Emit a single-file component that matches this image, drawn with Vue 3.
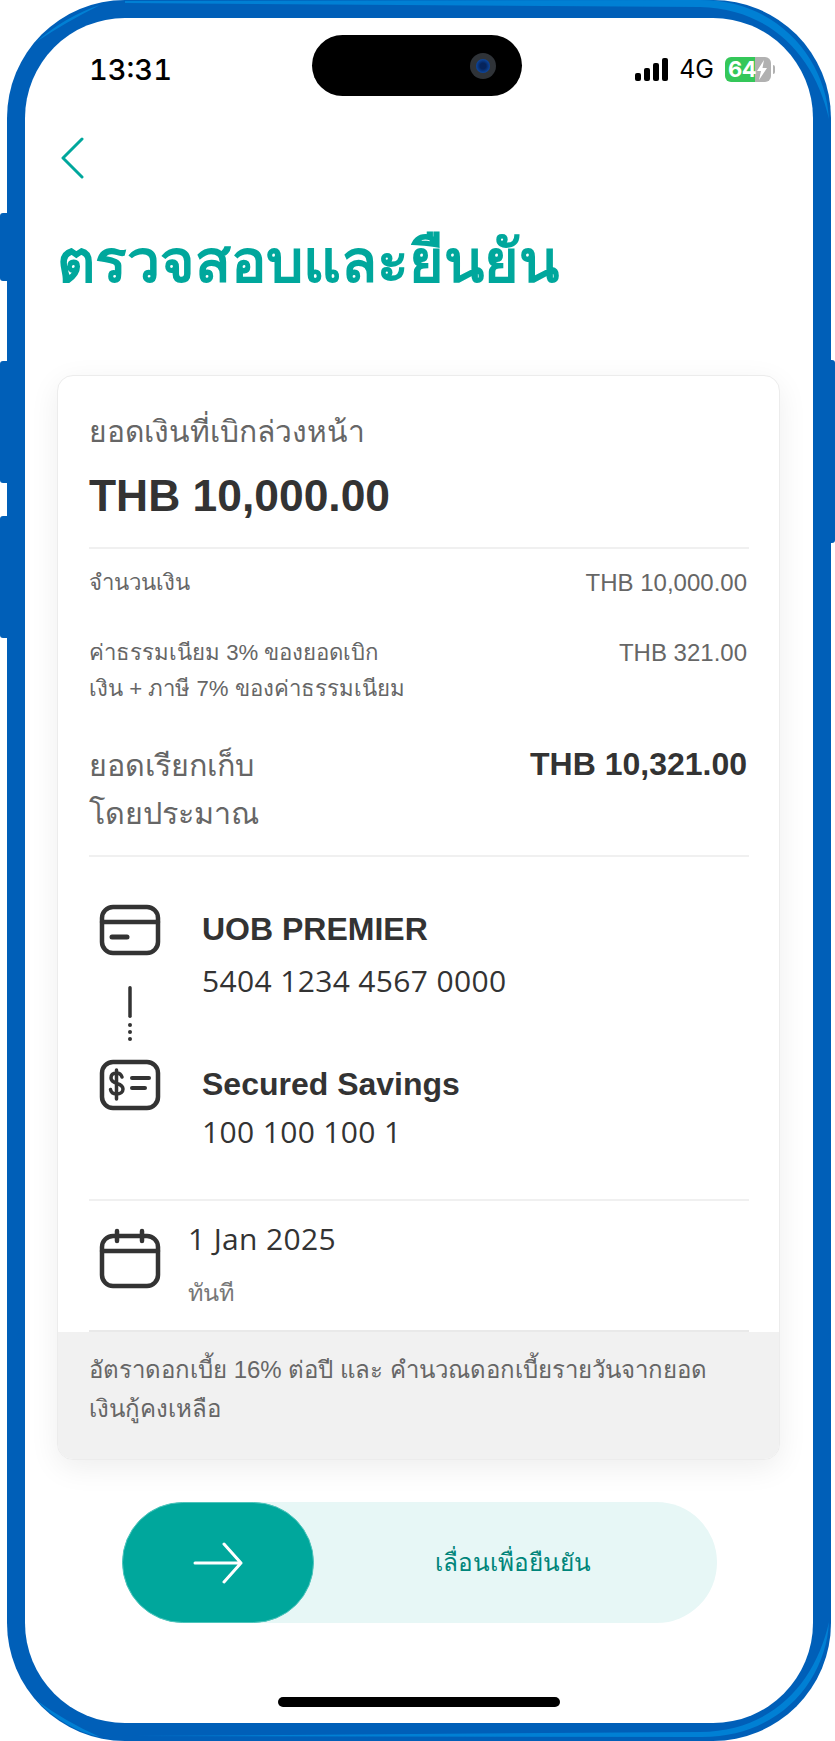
<script setup>
const fees = [
  { lines: ['จำนวนเงิน'], amount: 'THB 10,000.00' },
  { lines: ['ค่าธรรมเนียม 3% ของยอดเบิก', 'เงิน + ภาษี 7% ของค่าธรรมเนียม'], amount: 'THB 321.00' }
];
</script>

<template>
  <div class="phone">
    <i class="side-btn btn-a"></i>
    <i class="side-btn btn-b"></i>
    <i class="side-btn btn-c"></i>
    <i class="side-btn btn-d"></i>
    <!-- bezel highlights, page coordinates -->
    <svg class="shine" width="835" height="1741" viewBox="0 0 835 1741" fill="#0080d4">
      <path d="M125 1 700 0C780 0 826 61 829 119 815 57 772 9 700 7L125 3z" />
      <path d="M829 1622C826 1680 780 1738 700 1737L135 1736 700 1732C772 1731 815 1684 829 1622z" />
      <path d="M36 42Q66 16 100 5 66 22 36 42z" />
      <path d="M36 1700Q66 1730 100 1737 66 1722 36 1700z" />
    </svg>
    <div class="screen">
      <div class="island"><span class="lens"><span class="lens-in"></span></span></div>

      <div class="status">
        <span class="time">13:31</span>
        <div class="status-right">
          <div class="signal"><i></i><i></i><i></i><i></i></div>
          <span class="net">4G</span>
          <div class="battery">
            <span class="batt-level">64</span>
            <svg class="bolt" width="12" height="20" viewBox="0 0 12 20"><path d="M8 0 1 11h4l-2 9 8-12H6.500z" fill="#fff" /></svg>
          </div>
          <i class="batt-nub"></i>
        </div>
      </div>

      <svg class="back" width="24" height="42" viewBox="0 0 24 42" fill="none">
        <path d="M22 2 3 21l19 19" stroke="#00a79c" stroke-width="3" stroke-linecap="round" stroke-linejoin="round" />
      </svg>

      <h1 class="title">ตรวจสอบและยืนยัน</h1>

      <div class="card">
        <div class="card-body">
          <p class="lead">ยอดเงินที่เบิกล่วงหน้า</p>
          <p class="total">THB 10,000.00</p>
          <hr />
          <div class="fees">
            <div v-for="f in fees" :key="f.amount" class="fee">
              <div class="fee-label"><div v-for="l in f.lines" :key="l">{{ l }}</div></div>
              <span class="fee-amount">{{ f.amount }}</span>
            </div>
          </div>
          <div class="sum">
            <span class="sum-label">ยอดเรียกเก็บ<br />โดยประมาณ</span>
            <span class="sum-amount">THB 10,321.00</span>
          </div>
          <hr />
          <div class="accounts">
            <div class="icons">
              <svg width="62" height="52" viewBox="0 0 62 52" fill="none" stroke="#333" stroke-width="4.500" stroke-linecap="round">
                <rect x="3" y="3" width="56" height="46" rx="11" />
                <path d="M3 18h56" />
                <path d="M13 33h15" stroke-width="5" />
              </svg>
              <svg class="link" width="6" height="56" viewBox="0 0 6 56" fill="#333">
                <rect x="1.250" y="0" width="3.500" height="32" rx="1.700" />
                <circle cx="3" cy="39" r="2" />
                <circle cx="3" cy="46" r="2" />
                <circle cx="3" cy="53" r="2" />
              </svg>
              <svg width="62" height="52" viewBox="0 0 62 52" fill="none" stroke="#333" stroke-width="4.500" stroke-linecap="round">
                <rect x="3" y="3" width="56" height="46" rx="11" />
                <path d="M23 18c-1-3-3-4-5.500-4-3.500 0-5.500 2-5.500 5 0 7 12 4 12 11 0 3-2.500 5-6.500 5-3 0-5.500-1.500-6-4.500M17.500 11v29" stroke-width="3.500" />
                <path d="M33 19h17" stroke-width="4" />
                <path d="M33 29h13" stroke-width="4" />
              </svg>
            </div>
            <div class="acc-text">
              <div class="acc">
                <p class="acc-name">UOB PREMIER</p>
                <p class="acc-no">5404 1234 4567 0000</p>
              </div>
              <div class="acc">
                <p class="acc-name">Secured Savings</p>
                <p class="acc-no">100 100 100 1</p>
              </div>
            </div>
          </div>
          <hr />
          <div class="date">
            <svg width="62" height="62" viewBox="0 0 62 62" fill="none" stroke="#333" stroke-width="4.500" stroke-linecap="round">
              <rect x="3" y="9" width="56" height="50" rx="11" />
              <path d="M3 24h56" />
              <path d="M18 4v10M43 4v10" />
            </svg>
            <div class="date-text">
              <p class="date-main">1 Jan 2025</p>
              <p class="date-sub">ทันที</p>
            </div>
          </div>
          <hr class="last-rule" />
        </div>
        <div class="note">อัตราดอกเบี้ย 16% ต่อปี และ คำนวณดอกเบี้ยรายวันจากยอด<br />เงินกู้คงเหลือ</div>
      </div>

      <div class="slider">
        <div class="knob">
          <svg width="50" height="42" viewBox="0 0 50 42" fill="none" stroke="#fff" stroke-width="3" stroke-linecap="round" stroke-linejoin="round">
            <path d="M2 21h46M31 2l17 19-17 19" />
          </svg>
        </div>
        <span class="slide-text">เลื่อนเพื่อยืนยัน</span>
      </div>

      <div class="home-bar"></div>
    </div>
  </div>
</template>

<style scoped>
p, h1 { margin: 0; }
hr { border: 0; border-top: 2px solid #f0f0f0; margin: 0; }

.phone {
  position: relative;
  box-sizing: border-box;
  width: 824px;
  height: 1741px;
  margin-left: 7px;
  background: #005fb8;
  border-radius: 118px;
  padding: 18px;
}
.shine { position: absolute; left: -7px; top: 0; }
.side-btn { position: absolute; left: -7px; width: 7px; background: #005fb8; border-radius: 3px 0 0 3px; }
.btn-a { top: 213px; height: 68px; }
.btn-b { top: 361px; height: 122px; }
.btn-c { top: 516px; height: 122px; }
.btn-d { left: auto; right: -4px; top: 360px; height: 183px; width: 4px; border-radius: 0 3px 3px 0; }

.screen {
  position: relative;
  height: 1705px;
  background: #fff;
  border-radius: 100px;
  overflow: hidden;
  font-family: "Liberation Sans", "Noto Sans", sans-serif;
  color: #333;
}
.island {
  position: absolute;
  left: 287px;
  top: 17px;
  width: 210px;
  height: 61px;
  background: #000;
  border-radius: 31px;
}
.lens {
  position: absolute;
  right: 26px;
  top: 18px;
  width: 26px;
  height: 26px;
  border-radius: 50%;
  background: #2f3338;
  display: flex;
  align-items: center;
  justify-content: center;
}
.lens-in { width: 14px; height: 14px; border-radius: 50%; background: radial-gradient(circle, #06245c 30%, #0b4aa8 75%); }

.status {
  display: flex;
  justify-content: space-between;
  align-items: center;
  padding: 37px 38px 0 64px;
  height: 28px;
}
.time { font-family: Inter, sans-serif; font-size: 29px; font-weight: 500; color: #000; font-variant-numeric: tabular-nums; }
.status-right { display: flex; align-items: center; }
.signal { display: flex; align-items: flex-end; gap: 3px; height: 23px; margin-right: 11px; }
.signal i { width: 6px; background: #000; border-radius: 2px; }
.signal i:nth-child(1) { height: 8px; }
.signal i:nth-child(2) { height: 13px; }
.signal i:nth-child(3) { height: 18px; }
.signal i:nth-child(4) { height: 23px; }
.net { font-family: Inter, sans-serif; font-size: 25px; color: #000; margin-right: 11px; }
.battery {
  position: relative;
  width: 46px;
  height: 25px;
  background: linear-gradient(90deg, #34c759 65%, #b1b1b1 65%);
  border-radius: 6px;
  display: flex;
  align-items: center;
  color: #fff;
}
.batt-level { font-family: Inter, sans-serif; font-size: 22px; font-weight: 700; padding-left: 3px; letter-spacing: -0.5px; }
.bolt { position: absolute; right: 3px; top: 3px; }
.batt-nub { width: 2px; height: 9px; margin-left: 2px; background: #b1b1b1; border-radius: 0 2px 2px 0; }

.back { display: block; margin: 54px 0 0 35px; }
.title {
  margin: 43px 0 0 32px;
  font-size: 59px;
  line-height: 80px;
  font-weight: 700;
  color: #00a79c;
}

.card {
  box-sizing: border-box;
  width: 723px;
  height: 1085px;
  margin: 73px 0 0 32px;
  background: #fff;
  border: 1px solid #ececec;
  border-radius: 16px;
  box-shadow: 0 8px 30px rgba(0, 0, 0, 0.07);
  display: flex;
  flex-direction: column;
  overflow: hidden;
}
.card-body { flex: 1; padding: 36px 30px 0 31px; display: flex; flex-direction: column; }
.lead { font-size: 30px; line-height: 40px; color: #666; }
.total { font-size: 44.400px; line-height: 50px; font-weight: 700; margin: 19px 0 26px; }

.fees { padding-top: 16px; }
.fee { display: flex; justify-content: space-between; margin-bottom: 34px; padding-right: 2px; }
.fee-label { font-size: 22.200px; line-height: 36px; color: #666; white-space: nowrap; }
.fee-amount { font-size: 24px; line-height: 36px; color: #666; }

.sum { display: flex; justify-content: space-between; margin-bottom: 18px; padding-right: 2px; }
.sum-label { font-size: 30.500px; line-height: 48px; color: #666; }
.sum-amount { font-size: 32px; line-height: 42px; font-weight: 700; margin-top: 2px; }

.accounts { display: flex; padding: 47px 0 0 10px; height: 342px; box-sizing: border-box; }
.icons { display: flex; flex-direction: column; align-items: center; width: 62px; }
.link { margin: 30px 0 17px; }
.acc-text { margin-left: 41px; padding-top: 6px; }
.acc { height: 155px; }
.acc-name { font-size: 32px; line-height: 38px; font-weight: 700; }
.acc-no { font-family: "Open Sans", sans-serif; font-size: 30px; line-height: 40px; margin-top: 13px; letter-spacing: 0.35px; }
.acc + .acc .acc-no { margin-top: 9px; }

.date { display: flex; padding: 26px 0 0 10px; }
.date-text { margin: -8px 0 0 27px; }
.date-main { font-family: "Open Sans", sans-serif; font-size: 30px; line-height: 40px; letter-spacing: 0.35px; }
.date-sub { font-size: 23.500px; line-height: 36px; color: #777; margin-top: 16px; }
.last-rule { margin-top: auto; border-top-color: #e9e9e9; }

.note {
  height: 127px;
  box-sizing: border-box;
  padding: 18px 31px 0;
  background: #f1f1f1;
  font-size: 24px;
  line-height: 39px;
  color: #666;
}

.slider {
  display: flex;
  align-items: center;
  width: 595px;
  height: 121px;
  margin: 42px 0 0 97px;
  background: #e7f7f6;
  border-radius: 61px;
}
.knob {
  width: 192px;
  height: 121px;
  background: #00a79c;
  border: 1px solid #4cc4bb;
  box-sizing: border-box;
  border-radius: 61px;
  display: flex;
  align-items: center;
  justify-content: center;
}
.slide-text { flex: 1; text-align: center; font-size: 24.300px; color: #00857a; padding-right: 6px; }

.home-bar {
  width: 282px;
  height: 10px;
  margin: 74px 0 0 253px;
  background: #000;
  border-radius: 5px;
}
</style>

<style>
html, body { background: #fff; overflow: hidden; }
</style>
